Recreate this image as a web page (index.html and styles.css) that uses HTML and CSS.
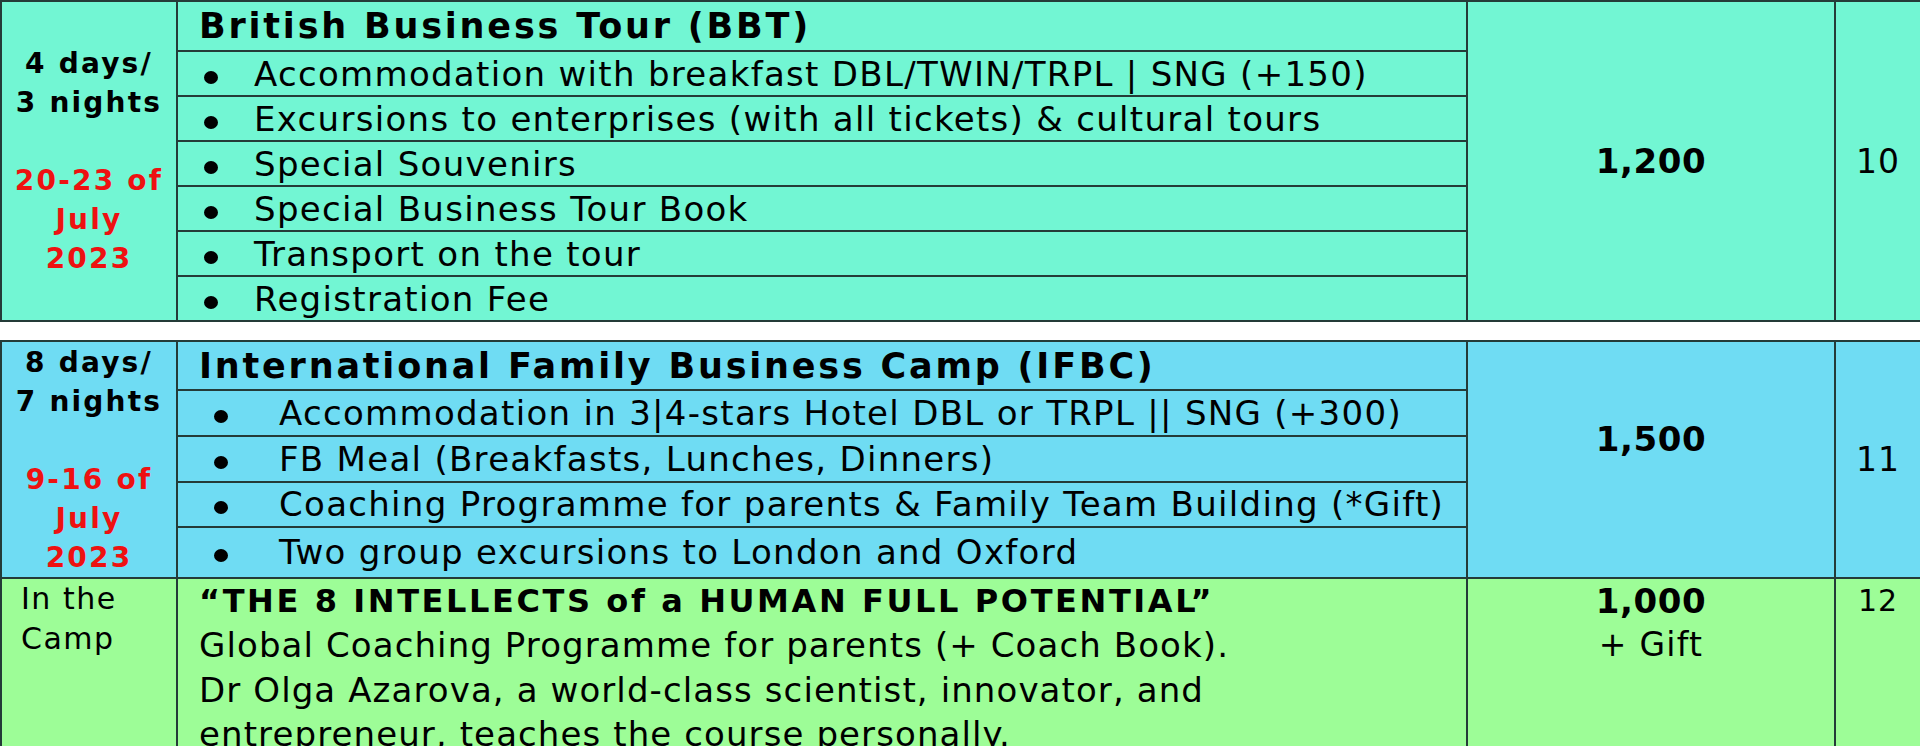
FILE: index.html
```html
<!DOCTYPE html>
<html lang="en">
<head>
<meta charset="utf-8">
<title>Tours</title>
<link rel="stylesheet" href="styles.css">
</head>
<body>
<table class="tour tour--bbt">
  <colgroup><col class="c-when"><col class="c-desc"><col class="c-price"><col class="c-count"></colgroup>
  <tbody class="sect sect--mint">
    <tr class="r-head">
      <td rowspan="7" class="when when--mid">
        <div class="days">4 days/<br>3 nights</div>
        <div class="date">20-23 of<br>July<br>2023</div>
      </td>
      <td class="title">British Business Tour (BBT)</td>
      <td rowspan="7" class="price">1,200</td>
      <td rowspan="7" class="count">10</td>
    </tr>
    <tr class="r-item"><td class="item"><span class="dot"></span>Accommodation with breakfast DBL/TWIN/TRPL | SNG (+150)</td></tr>
    <tr class="r-item"><td class="item"><span class="dot"></span>Excursions to enterprises (with all tickets) &amp; cultural tours</td></tr>
    <tr class="r-item"><td class="item"><span class="dot"></span>Special Souvenirs</td></tr>
    <tr class="r-item"><td class="item"><span class="dot"></span>Special Business Tour Book</td></tr>
    <tr class="r-item"><td class="item"><span class="dot"></span>Transport on the tour</td></tr>
    <tr class="r-item"><td class="item"><span class="dot"></span>Registration Fee</td></tr>
  </tbody>
</table>

<table class="tour tour--ifbc">
  <colgroup><col class="c-when"><col class="c-desc"><col class="c-price"><col class="c-count"></colgroup>
  <tbody class="sect sect--blue">
    <tr class="r-head r-head--ifbc">
      <td rowspan="5" class="when when--top">
        <div class="days">8 days/<br>7 nights</div>
        <div class="date">9-16 of<br>July<br>2023</div>
      </td>
      <td class="title">International Family Business Camp (IFBC)</td>
      <td rowspan="5" class="price price--raised">1,500</td>
      <td rowspan="5" class="count">11</td>
    </tr>
    <tr class="r-item r-item--first"><td class="item item--wide"><span class="dot"></span>Accommodation in 3|4-stars Hotel DBL or TRPL || SNG (+300)</td></tr>
    <tr class="r-item"><td class="item item--wide"><span class="dot"></span>FB Meal (Breakfasts, Lunches, Dinners)</td></tr>
    <tr class="r-item"><td class="item item--wide"><span class="dot"></span>Coaching Programme for parents &amp; Family Team Building (*Gift)</td></tr>
    <tr class="r-item r-item--last"><td class="item item--wide"><span class="dot"></span>Two group excursions to London and Oxford</td></tr>
  </tbody>
  <tbody class="sect sect--green">
    <tr class="r-camp">
      <td class="camp-when">In the<br>Camp</td>
      <td class="camp-desc">
        <div class="camp-title">“THE 8 INTELLECTS of a HUMAN FULL POTENTIAL”</div>
        <div class="camp-text">Global Coaching Programme for parents (+ Coach Book).<br>Dr Olga Azarova, a world-class scientist, innovator, and<br>entrepreneur, teaches the course personally.</div>
      </td>
      <td class="camp-price"><div class="camp-sum">1,000</div><div class="camp-gift">+ Gift</div></td>
      <td class="camp-count">12</td>
    </tr>
  </tbody>
</table>
</body>
</html>
```

FILE: styles.css
```css
html, body {
  margin: 0;
  padding: 0;
  background: #ffffff;
}

body {
  font-family: "DejaVu Sans", Verdana, sans-serif;
  color: #000;
}

.tour {
  width: 1920px;
  border-collapse: collapse;
  table-layout: fixed;
}

.c-when { width: 176px; }
.c-desc { width: 1290px; }
.c-price { width: 368px; }
.c-count { width: 86px; }

td {
  border: 2px solid #243b38;
  padding: 0;
}

.sect--mint td { background: #72f6d3; }
.sect--blue td { background: #6fdcf3; }
.sect--green td { background: #9dfd97; }

.tour--ifbc { margin-top: 18px; }

.r-head { height: 50px; }
.r-head--ifbc { height: 49px; }
.r-item { height: 45px; }
.r-item--first { height: 46px; }
.r-item--last { height: 51px; }

/* left column */
.when {
  text-align: center;
  font-weight: bold;
  font-size: 28px;
  line-height: 39px;
  letter-spacing: 2.2px;
}
.when--mid { vertical-align: middle; }
.when--top { vertical-align: top; padding-top: 1px; }
.date {
  color: #ee1111;
  margin-top: 39px;
}

/* titles */
.title {
  padding-left: 21px;
  font-weight: bold;
  font-size: 35px;
  letter-spacing: 2.8px;
  vertical-align: middle;
  white-space: nowrap;
}

/* bullet rows */
.item {
  padding-left: 26px;
  font-size: 34px;
  letter-spacing: 1.3px;
  vertical-align: middle;
  white-space: nowrap;
}
.item--wide { padding-left: 36px; }

.dot {
  display: inline-block;
  width: 14px;
  height: 13px;
  border-radius: 50%;
  background: #000;
  vertical-align: 2px;
  margin-right: 36px;
}
.item--wide .dot { margin-right: 51px; }

/* price and count */
.price {
  text-align: center;
  vertical-align: middle;
  font-weight: bold;
  font-size: 34px;
  letter-spacing: 0.6px;
}
.price--raised { padding-bottom: 42px; }

.count {
  text-align: center;
  vertical-align: middle;
  font-size: 33px;
  letter-spacing: 1px;
}

/* green camp row */
.r-camp td { vertical-align: top; }

.camp-when {
  padding: 0 0 0 19px;
  font-size: 30px;
  line-height: 40px;
  letter-spacing: 1.5px;
}

.camp-desc {
  padding: 0 0 0 21px;
  white-space: nowrap;
}
.camp-title {
  font-weight: bold;
  font-size: 32px;
  line-height: 44px;
  letter-spacing: 2.6px;
}
.camp-text {
  font-size: 34px;
  line-height: 44.5px;
  letter-spacing: 1.1px;
}

.camp-price {
  text-align: center;
  padding-top: 1px;
}
.camp-sum {
  font-weight: bold;
  font-size: 34px;
  line-height: 43px;
  letter-spacing: 0.6px;
}
.camp-gift {
  font-size: 33px;
  line-height: 43px;
  letter-spacing: 1.3px;
}

.camp-count {
  text-align: center;
  padding-top: 2px;
  font-size: 30px;
  line-height: 40px;
  letter-spacing: 1px;
}
```
